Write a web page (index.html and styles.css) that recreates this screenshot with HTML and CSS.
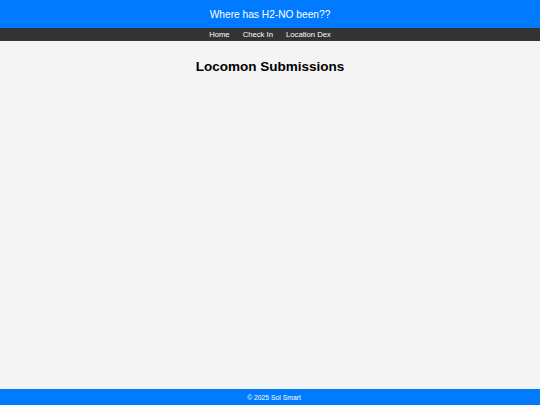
FILE: index.html
```html
<!DOCTYPE html>
<html>
<head>
<meta charset="utf-8">
<link rel="stylesheet" href="styles.css">
</head>
<body>
<div class="page">
  <header class="site-header">Where has H2-NO been??</header>
  <nav class="site-nav">
    <a href="#">Home</a>
    <a href="#">Check In</a>
    <a href="#">Location Dex</a>
  </nav>
  <main class="content">
    <h1 class="title">Locomon Submissions</h1>
  </main>
  <footer class="site-footer">© 2025 Sol Smart</footer>
</div>
</body>
</html>
```
FILE: styles.css
```css
html, body {
  margin: 0;
  padding: 0;
  height: 100%;
}
body {
  font-family: "Liberation Sans", Arial, sans-serif;
  background: #f4f4f4;
  color: #000;
}
.page {
  display: flex;
  flex-direction: column;
  min-height: 100vh;
}
.site-header {
  background: #007bff;
  color: #fff;
  height: 28px;
  display: flex;
  align-items: center;
  justify-content: center;
  font-size: 10.2px;
}
.site-nav {
  background: #333;
  height: 13px;
  display: flex;
  align-items: center;
  justify-content: center;
  gap: 13px;
}
.site-nav a {
  color: #fff;
  text-decoration: none;
  font-size: 7.7px;
}
.content {
  flex: 1;
  padding-top: 18px;
}
.title {
  margin: 0;
  text-align: center;
  font-size: 13.5px;
  font-weight: bold;
}
.site-footer {
  background: #007bff;
  color: #fff;
  height: 16px;
  display: flex;
  align-items: center;
  justify-content: center;
  padding-left: 8px;
  font-size: 6.8px;
}
```
